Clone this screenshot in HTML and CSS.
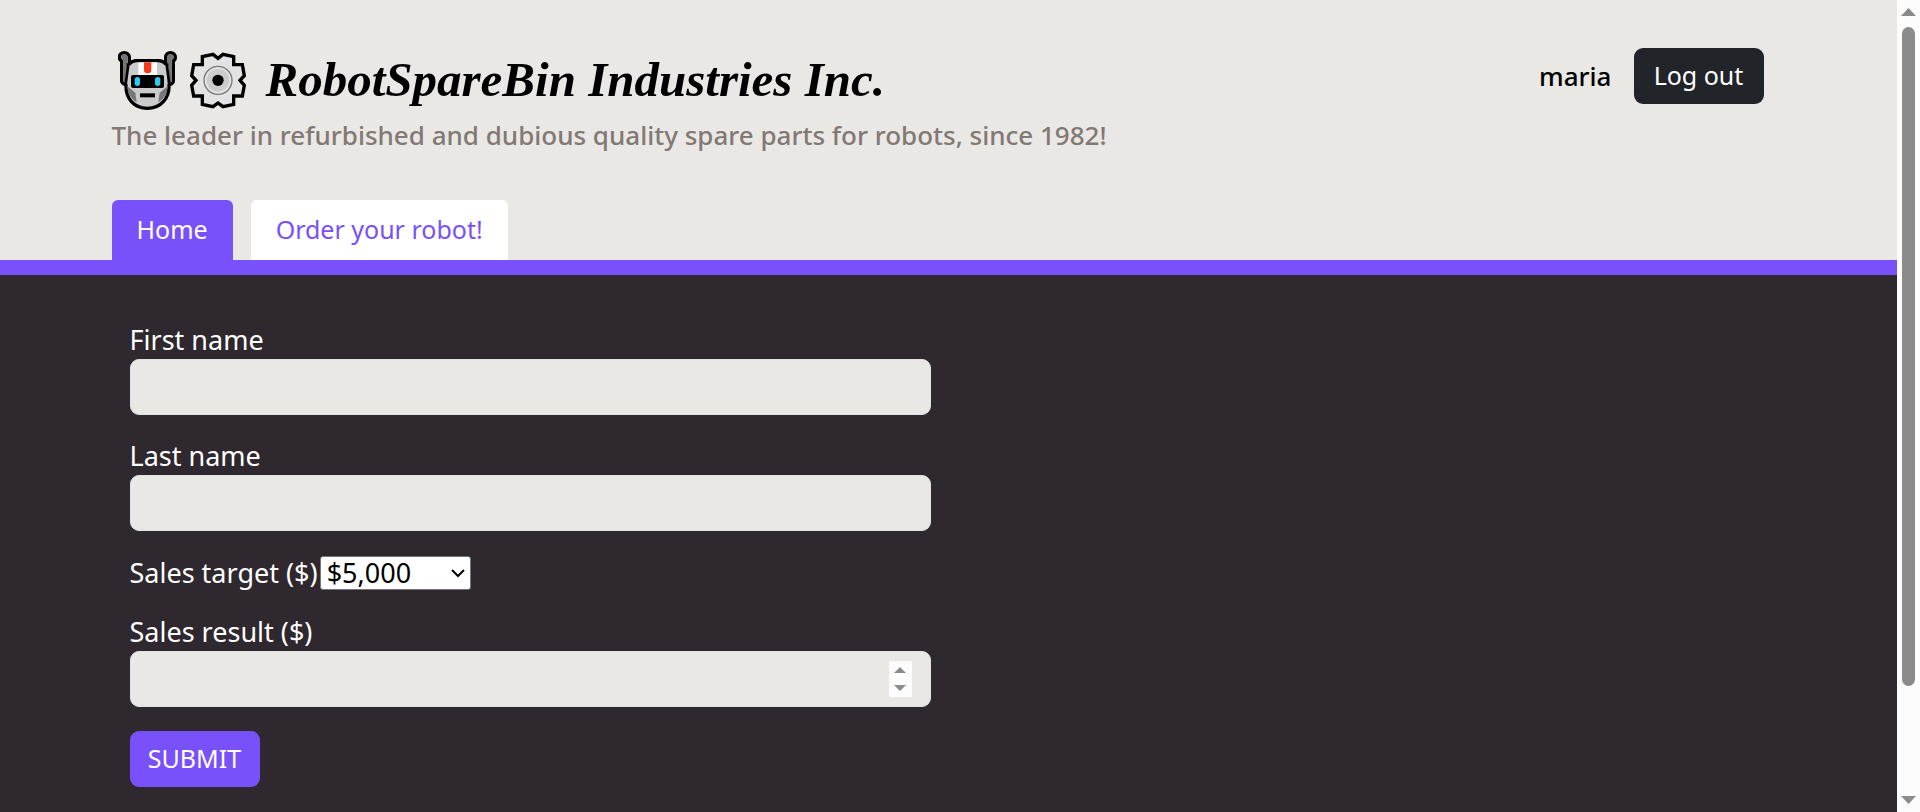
FILE: index.html
```html
<!DOCTYPE html>
<html lang="en">
<head>
<meta charset="utf-8">
<meta name="viewport" content="width=device-width, initial-scale=1">
<title>RobotSpareBin Industries Inc.</title>
<link rel="stylesheet" href="styles.css">
</head>
<body>
<div class="page">
  <header class="header">
    <div class="masthead container">
      <div class="brand">
        <h1 class="title">
          <svg class="icon" viewBox="54 63 177 177" aria-hidden="true">
            <path d="M73 68 C64 68 58 74 58 82 C58 87 61 91 65 93 L65 154 C65 158 72 164 78 164 C76 205 102 235 142 235 C182 235 209 205 207 164 C214 164 220 158 220 154 L220 93 C224 91 226 87 226 82 C226 74 220 68 211 68 C203 68 197 74 197 82 L197 102 C191 95 184 92 176 92 L109 92 C101 92 94 95 88 102 L88 82 C88 74 81 68 73 68Z" fill="#cbcbcb" stroke="#000" stroke-width="10" stroke-linejoin="round"/>
            <path d="M73 73 a9 9 0 0 1 9 9 V112 V160 L70 154 V91 L64 84 C63 78 67 73 73 73Z M211 73 a9 9 0 0 0 -9 9 V112 V160 L215 154 V91 L221 84 C222 78 218 73 211 73Z" fill="#747474"/>
            <path d="M84 100 V112 L77 160 M201 100 V112 L208 160" fill="none" stroke="#000" stroke-width="8"/>
            <path d="M82 169 L106 188 L110 217 C94 207 83 191 82 169Z M203 169 L179 188 L175 217 C191 207 202 191 203 169Z" fill="#777"/>
            <path d="M115 97 H171 V135 H115Z" fill="#fff"/>
            <path d="M132 97 H154 V120 a11 10 0 0 1 -22 0Z" fill="#f23a1d"/>
            <rect x="93" y="135" width="99" height="39" rx="6"/>
            <rect x="104" y="141" width="16" height="27" rx="8" fill="#2bcaf4"/>
            <rect x="165" y="141" width="16" height="27" rx="8" fill="#2bcaf4"/>
            <rect x="120" y="190" width="45" height="12"/>
          </svg>
          <svg class="icon" viewBox="267 63 177 177" aria-hidden="true">
            <path d="M339 73 L354 85 L369 73 L401 80 V104 H427 L433 137 L420 151 L433 166 L427 198 H401 V223 L369 230 L354 219 L339 230 L307 223 V198 H281 L275 166 L288 151 L275 137 L281 104 H307 V80Z" fill="#e3e3e3" stroke="#000" stroke-width="10"/>
            <circle cx="354" cy="151" r="42" fill="#e3e3e3" stroke="#777" stroke-width="4"/>
            <circle cx="354" cy="151" r="34" fill="#cbcbcb"/>
            <circle cx="354" cy="151" r="17"/>
          </svg>
          <span class="name">RobotSpareBin Industries Inc.</span>
        </h1>
        <p class="tagline">The leader in refurbished and dubious quality spare parts for robots, since 1982!</p>
      </div>
      <div class="account">
        <span class="user">maria</span>
        <button class="button button-dark" type="button">Log out</button>
      </div>
    </div>
    <nav class="tabs container">
      <a class="tab tab-active" href="#home">Home</a>
      <a class="tab" href="#order">Order your robot!</a>
    </nav>
  </header>
  <main class="container">
    <form class="form">
      <div class="field">
        <label for="first">First name</label>
        <input class="input" id="first" type="text">
      </div>
      <div class="field">
        <label for="last">Last name</label>
        <input class="input" id="last" type="text">
      </div>
      <div class="field-inline">
        <label for="target">Sales target ($)</label>
        <div class="select-box">
          <select class="select" id="target"><option>$5,000</option></select>
          <svg class="chevron" viewBox="0 0 14 9" aria-hidden="true"><path d="M1 1 L7 7 L13 1" fill="none" stroke="#000" stroke-width="2"/></svg>
        </div>
      </div>
      <div class="field">
        <label for="result">Sales result ($)</label>
        <div class="number-box">
          <input class="input" id="result" type="number">
          <svg class="spinner" viewBox="0 0 23 36" aria-hidden="true"><path fill="#fcfcfc" d="M0 0h23v36H0z"/><path fill="#8b8b8b" d="M11 6 L17 12 H5Z M11 30 L17 24 H5Z"/></svg>
        </div>
      </div>
      <button class="button button-primary" type="button">SUBMIT</button>
    </form>
  </main>
</div>
<div class="scrollbar" aria-hidden="true">
  <svg class="arrow" viewBox="0 0 15 8"><path d="M0 8 L7.500 0 L15 8Z" fill="#8b8b8b"/></svg>
  <div class="track"><div class="thumb"></div></div>
  <svg class="arrow" viewBox="0 0 15 8"><path d="M0 0 L7.500 8 L15 0Z" fill="#8b8b8b"/></svg>
</div>
</body>
</html>
```
FILE: styles.css
```css
* {
  box-sizing: border-box;
}

body {
  margin: 0;
  display: flex;
  min-height: 100vh;
  background: #2f282e;
  color: #fff;
  font-family: "Noto Sans", Roboto, sans-serif;
  font-size: 25px;
  line-height: 34px;
}

button,
input,
select {
  font: inherit;
}

.page {
  flex: 1;
  min-width: 0;
}

.container {
  max-width: 1710px;
  margin: 0 auto;
  padding: 0 40px 0 18px;
}

.header {
  background: #e9e8e4;
  border-bottom: 15px solid #7851fa;
  color: #000;
}

.masthead {
  display: flex;
  justify-content: space-between;
  align-items: flex-start;
  padding-top: 48px;
}

.title {
  display: flex;
  align-items: center;
  gap: 12px;
  margin: 0;
  padding-left: 6px;
  height: 64px;
  font: italic bold 49px/64px "Liberation Serif", serif;
}

.icon {
  width: 59px;
  height: 59px;
}

.name {
  padding-left: 6px;
}

.tagline {
  margin: 6px 0 0;
  color: #837874;
  font-size: 26px;
  font-weight: 500;
}

.account {
  display: flex;
  align-items: center;
  gap: 22px;
}

.user {
  font-size: 26px;
  font-weight: 500;
}

.button {
  height: 56px;
  min-width: 130px;
  padding: 0 18px 2px;
  border: 0;
  border-radius: 9px;
  color: #fff;
}

.button-dark {
  background: #212529;
}

.button-primary {
  background: #7851fa;
}

.tabs {
  display: flex;
  gap: 18px;
  padding-top: 48px;
}

.tab {
  height: 60px;
  padding: 12px 25px;
  border-radius: 6px 6px 0 0;
  background: #fff;
  color: #7851fa;
  text-decoration: none;
}

.tab-active {
  background: #7851fa;
  color: #fff;
}

.form {
  display: flex;
  flex-direction: column;
  align-items: flex-start;
  gap: 24px;
  max-width: 837px;
  padding: 48px 18px 24px;
  font-size: 27px;
}

.form .button {
  font-size: 25px;
}

.field {
  display: flex;
  flex-direction: column;
  gap: 2px;
  width: 100%;
}

.field-inline {
  display: flex;
  align-items: center;
  gap: 2px;
  height: 36px;
}

.input {
  width: 100%;
  height: 56px;
  padding: 0 18px;
  border: 1px solid #dee2e6;
  border-radius: 9px;
  background: #e9e8e4;
  color: #212529;
  appearance: textfield;
}

.input::-webkit-inner-spin-button {
  appearance: none;
}

.select-box,
.number-box {
  position: relative;
}

.number-box {
  display: flex;
}

.select {
  display: block;
  width: 151px;
  height: 34px;
  padding: 0 6px;
  border: 1px solid #767676;
  border-radius: 3px;
  background: #fff;
  color: #000;
  line-height: 32px;
  appearance: none;
}

.chevron {
  position: absolute;
  top: 13px;
  right: 6px;
  width: 14px;
  height: 9px;
  pointer-events: none;
}

.spinner {
  position: absolute;
  top: 10px;
  right: 19px;
  width: 23px;
  height: 36px;
}

.scrollbar {
  position: sticky;
  top: 0;
  display: flex;
  flex-direction: column;
  align-items: center;
  gap: 11px;
  width: 23px;
  height: 100vh;
  padding: 8px 0;
  background: #fcfcfc;
}

.arrow {
  width: 15px;
  height: 8px;
}

.track {
  flex: 1;
  width: 13px;
}

.thumb {
  height: 87%;
  border-radius: 7px;
  background: #8b8b8b;
}
```
